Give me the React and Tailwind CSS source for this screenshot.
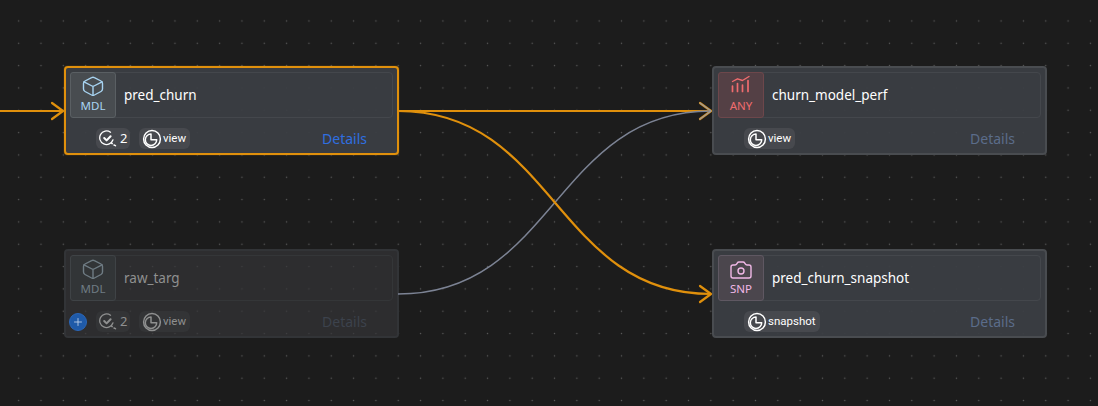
import React from "react";
import { Camera, Plus } from "lucide-react";

const CubeIcon = () => (
  <svg width="24" height="24" viewBox="0 0 24 24" fill="none" stroke="currentColor" strokeWidth="1.4" strokeLinecap="round" strokeLinejoin="round">
    <path d="M10.6 2.6 a2.8 2.8 0 0 1 2.8 0 L20 6 a2.8 2.8 0 0 1 1.5 2.5 V14 a2.8 2.8 0 0 1 -1.5 2.5 L13.4 20 a2.8 2.8 0 0 1 -2.8 0 L4 16.5 A2.8 2.8 0 0 1 2.5 14 V8.5 A2.8 2.8 0 0 1 4 6 Z" />
    <path d="M3 6.8 L12 11.5 L21 6.8 M12 11.5 V20.2" />
  </svg>
);

const ViewIcon = () => (
  <svg width="20" height="20" viewBox="0 0 20 20" fill="none" stroke="currentColor" strokeWidth="1.5" strokeLinejoin="round">
    <circle cx="10" cy="10" r="8.4" />
    <path d="M9 5 A5.7 5.7 0 1 0 14.7 10.7 H9 Z" />
  </svg>
);

const TestsIcon = () => (
  <svg width="18" height="18" viewBox="0 0 18 18" fill="none" stroke="currentColor" strokeWidth="1.3" strokeLinecap="round" strokeLinejoin="round">
    <path d="M11.5 2.2 A6.8 6.8 0 1 0 14 9.8" />
    <path d="M5.2 8 L7.6 10.4 L11.6 6.2" strokeWidth="2" />
    <path d="M12.5 13 L13.2 13.6 M15 15 L16.5 15.6" strokeWidth="1.5" />
  </svg>
);

const PerfIcon = () => (
  <svg width="24" height="24" viewBox="0 0 24 24" fill="none" stroke="currentColor" strokeLinecap="round" strokeLinejoin="round">
    <path d="M3.5 11 V16.5 M8.5 8.5 V16.5 M13.5 10 V16.5 M19 5.5 V16.5" strokeWidth="1.7" />
    <path d="M3.5 6.5 L8.5 3.8 L13.5 5.5 L20 1.5" strokeWidth="1.4" />
  </svg>
);

const Node = ({ left, top, name, tag, icon, accent, box, tests, kind, selected, faded, details }) => (
  <div
    className={`absolute w-[335px] h-[89px] rounded-[4px] border-2 p-1 flex flex-col ${
      selected ? "border-[#e0900c] shadow-[0_0_1px_#e0900c]" : faded ? "border-[#323437]" : "border-[#494c50]"
    } ${faded ? "bg-[#343538b3]" : "bg-[#3b3e43f2]"}`}
    style={{ left, top }}
  >
    <div className={`h-[46px] shrink-0 flex items-center rounded-[4px] border ${faded ? "border-[#343638]" : "border-[#44474c]"}`}>
      <div
        className={`w-[46px] h-[46px] -ml-px shrink-0 flex flex-col items-center pt-[2px] rounded-[3px] border ${box} ${accent}`}
      >
        {icon}
        <span className="text-[11.5px] leading-[14px]">{tag}</span>
      </div>
      <span className={`ml-2 text-[13.5px] ${faded ? "text-[#8f9090]" : "text-white"}`}>{name}</span>
    </div>
    <div className="relative flex-1 flex items-start gap-[9px] pl-[26px] pr-[26px] pt-[10px]">
      {faded && (
        <button className="absolute left-[-1px] top-[12px] w-[18px] h-[18px] rounded-full bg-[#1f5aa8] border border-[#2a66b8] flex items-center justify-center text-[#c9d8ee]">
          <Plus size={12} strokeWidth={1.6} />
        </button>
      )}
      {tests && (
        <div className={`h-[21px] w-[34px] rounded-[6px] flex items-center gap-[3px] pl-[3px] text-[13px] ${faded ? "bg-[#333436] text-[#8f9090]" : "bg-[#47494e] text-white"}`}>
          <TestsIcon />
          <span>{tests}</span>
        </div>
      )}
      <div className={`h-[21px] rounded-[6px] flex items-center gap-[1px] pl-[3px] pr-1 font-['Roboto',sans-serif] text-[11.5px] ${faded ? "bg-[#333436] text-[#8f9090]" : "bg-[#47494e] text-white"}`}>
        <ViewIcon />
        <span>{kind}</span>
      </div>
      {details && <span className={`ml-auto text-[14px] leading-[21px] ${details}`}>Details</span>}
    </div>
  </div>
);

const App = () => {
  return (
    <div
      className="relative w-[1098px] h-[406px] overflow-hidden bg-[#1c1c1c] bg-[radial-gradient(circle,#5c5c5c_0.8px,transparent_1px)] bg-[size:22.33px_22.33px] bg-[position:7.5px_9.8px] font-['Noto_Sans','Open_Sans',sans-serif]"
    >
      <Node
        left={64}
        top={66}
        name="pred_churn"
        tag="MDL"
        icon={<CubeIcon />}
        accent="text-[#a8d4f2]"
        box="bg-[#484c50] border-[#5a5f63]"
        tests="2"
        kind="view"
        selected
        details="text-[#2f6fe0]"
      />
      <Node
        left={64}
        top={249}
        name="raw_targ"
        tag="MDL"
        icon={<CubeIcon />}
        accent="text-[#6f7c84]"
        box="bg-[#323537] border-[#3f4346]"
        tests="2"
        kind="view"
        faded
        details="text-[#3c424c]"
      />
      <Node
        left={712}
        top={66}
        name="churn_model_perf"
        tag="ANY"
        icon={<PerfIcon />}
        accent="text-[#f06c6e]"
        box="bg-[#544045] border-[#6d474b]"
        kind="view"
        details="text-[#5b6c8a]"
      />
      <Node
        left={712}
        top={249}
        name="pred_churn_snapshot"
        tag="SNP"
        icon={<Camera size={24} strokeWidth={1.4} />}
        accent="text-[#f0b8e6]"
        box="bg-[#4b464d] border-[#5f5862]"
        kind="snapshot"
        details="text-[#5b6c8a]"
      />

      {/* edges sit over the nodes */}
      <svg className="absolute inset-0 pointer-events-none" width="1098" height="406" fill="none">
        <path d="M398 111 H711" stroke="#e0900c" strokeWidth="2.2" />
        <path d="M700 103 L711 111 L700 119" stroke="#e0900c" strokeWidth="2.2" strokeLinecap="round" strokeLinejoin="round" />
        <path d="M398 294 C 555 294, 555 111, 711 111" stroke="#7c8394" strokeWidth="1.5" />
        <path d="M700 103 L711 111 L700 119" stroke="#9a9aa0" strokeWidth="1.3" strokeLinecap="round" strokeLinejoin="round" />
        <path d="M398 111 C 555 111, 555 294, 711 294" stroke="#e0900c" strokeWidth="2.2" />
        <path d="M0 111 H63" stroke="#e0900c" strokeWidth="2.2" />
        <path d="M52 103 L63 111 L52 119" stroke="#e0900c" strokeWidth="2.2" strokeLinecap="round" strokeLinejoin="round" />
        <path d="M700 286 L711 294 L700 302" stroke="#e0900c" strokeWidth="2.2" strokeLinecap="round" strokeLinejoin="round" />
      </svg>
    </div>
  );
};

export default App;
